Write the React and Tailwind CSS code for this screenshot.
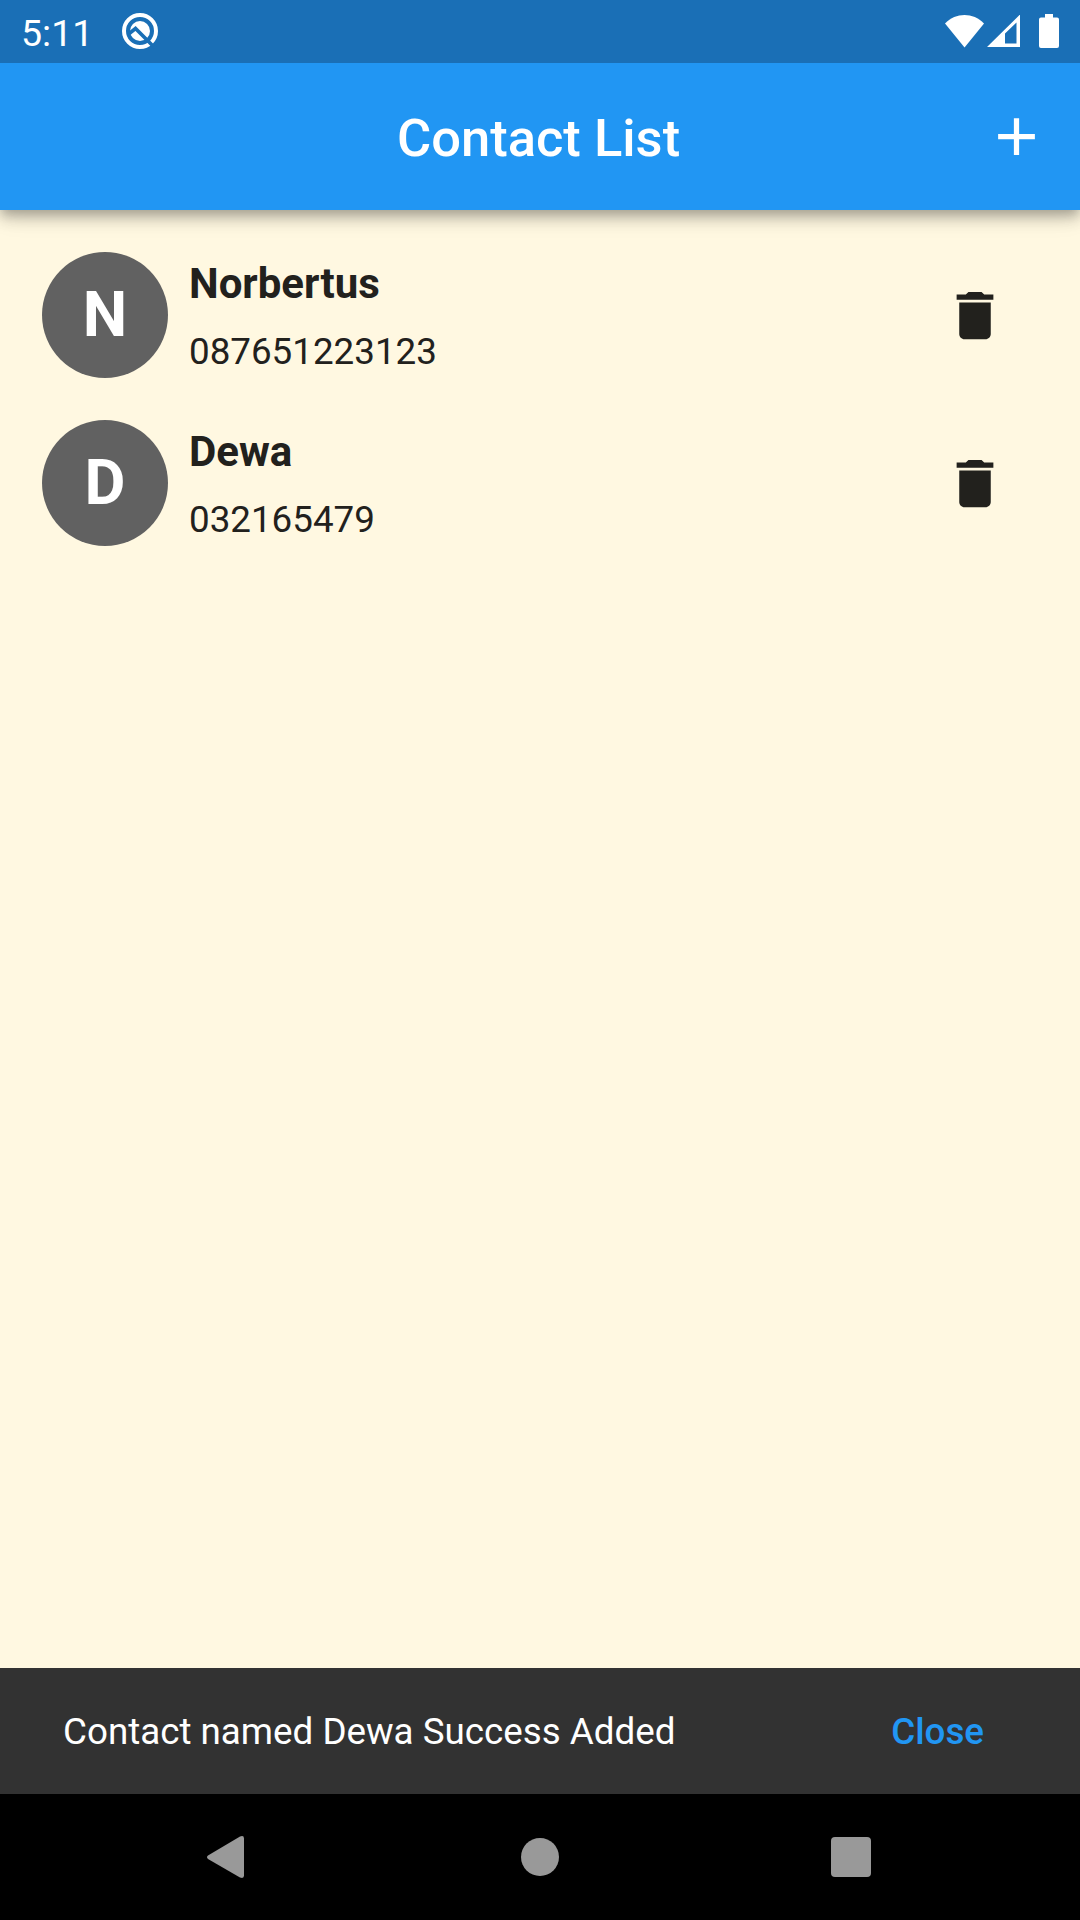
const contacts = [
  { name: "Norbertus", phone: "087651223123" },
  { name: "Dewa", phone: "032165479" },
];

function StatusBar() {
  return (
    <div className="relative z-10 flex h-[63px] items-center bg-[#1A6FB6] pl-[21px] pr-[21px] text-white">
      <span className="w-[70px] pt-[4px] text-[37.5px] leading-none">5:11</span>
      <svg className="mb-px ml-[30px]" width="38" height="38" viewBox="0 0 38 38" fill="none">
        <circle cx="19" cy="19" r="16" stroke="white" strokeWidth="4" />
        <circle cx="19" cy="19" r="10" fill="white" />
        <path d="M7 22.500 L14.500 16.500 L34 36" stroke="#1A6FB6" strokeWidth="3.6" />
      </svg>
      <div className="flex-1" />
      <svg className="mb-px" width="39" height="33" viewBox="0 0 39 33" fill="white">
        <path d="M0 8.500 C11 -2.800 28 -2.800 39 8.500 L19.500 32.500 Z" />
      </svg>
      <svg className="ml-[3px]" width="33" height="33" viewBox="0 0 33 33" fill="white">
        <path d="M0 32 L33 -0.500 V32 Z M18 18.500 V28.500 H29.500 V7.500 Z" fillRule="evenodd" />
      </svg>
      <svg className="mb-px ml-[19px]" width="20" height="34" viewBox="0 0 20 34" fill="white">
        <path d="M6 0 H14 V3.500 H18 Q20 3.500 20 5.500 V32 Q20 34 18 34 H2 Q0 34 0 32 V5.500 Q0 3.500 2 3.500 H6 Z" />
      </svg>
    </div>
  );
}

function ContactRow({ name, phone }) {
  return (
    <li className="flex h-[168px] items-center pl-[42px] pr-[69px]">
      <div className="flex size-[126px] items-center justify-center rounded-full bg-[#616161] pb-[2px] text-[63px] font-bold leading-none text-white">
        {name[0]}
      </div>
      <div className="ml-[21px] flex flex-1 flex-col pt-[5px]">
        <span className="text-[42px] font-bold leading-[63px]">{name}</span>
        <span className="mt-[5px] text-[36.75px] leading-[63px]">{phone}</span>
      </div>
      <svg width="72" height="63" viewBox="-1.7 0 27.4 24" fill="#22211D">
        <path d="M6 19c0 1.100.9 2 2 2h8c1.100 0 2-.9 2-2V7H6v12zM19 4h-3.500l-1-1h-5l-1 1H5v2h14V4z" />
      </svg>
    </li>
  );
}

export default function App() {
  return (
    <div className="flex h-[1920px] w-[1080px] flex-col overflow-hidden bg-[#FFF8E1] font-[Roboto,sans-serif] text-[#22211D]">
      <StatusBar />
      <header className="relative grid h-[147px] grid-cols-[1fr_auto_1fr] items-center bg-[#2196F3] text-white shadow-[0_5px_10px_-2px_rgba(0,0,0,0.2),0_10px_13px_rgba(0,0,0,0.14),0_3px_26px_rgba(0,0,0,0.12)]">
        <span />
        <h1 className="pr-[3px] pt-[3px] text-[52.5px] font-medium leading-none">Contact List</h1>
        <svg className="mr-8 justify-self-end" width="63" height="63" viewBox="0 0 24 24" fill="white">
          <path d="M19 13h-6v6h-2v-6H5v-2h6V5h2v6h6v2z" />
        </svg>
      </header>
      <ul className="flex-1 pt-[21px]">
        {contacts.map((c) => (
          <ContactRow key={c.name} {...c} />
        ))}
      </ul>
      <div className="flex h-[126px] items-center justify-between bg-[#323232] pl-[63px] pr-24 pt-[2px] text-[36.75px]">
        <span className="text-white">Contact named Dewa Success Added</span>
        <span className="font-medium text-[#2196F3]">Close</span>
      </div>
      <nav className="flex h-[126px] items-center bg-black pl-[206px]">
        <svg width="668" height="44" viewBox="0 0 668 44" fill="#999999">
          <path d="M2 20.500 L34 1.500 Q38 0 38 3.500 V40.500 Q38 44 34 42.500 L2 24 Q0 22.200 2 20.500 Z" />
          <circle cx="334" cy="22" r="19" />
          <rect x="625" y="2" width="40" height="40" rx="4" />
        </svg>
      </nav>
    </div>
  );
}
